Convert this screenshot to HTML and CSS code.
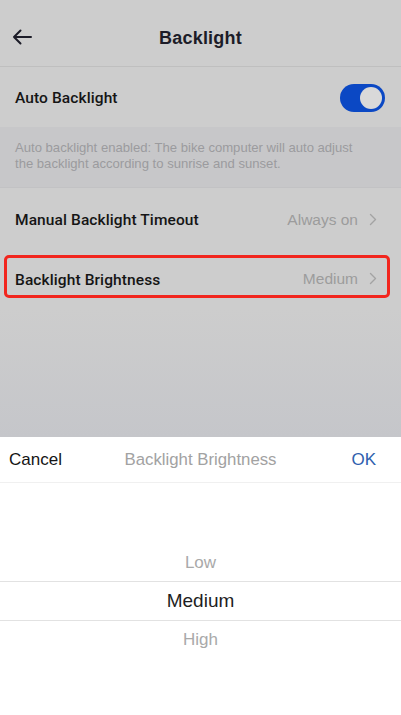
FILE: index.html
```html
<!DOCTYPE html>
<html>
<head>
<meta charset="utf-8">
<link rel="stylesheet" href="styles.css">
</head>
<body>
<div class="screen">
  <div class="page">
    <header class="nav">
      <span class="back">
        <svg width="20" height="16" viewBox="0 0 20 16"><path d="M19 8H2M8.5 1.5L2 8l6.5 6.5" fill="none" stroke="#1c1c28" stroke-width="2" stroke-linecap="round" stroke-linejoin="round"/></svg>
      </span>
      <h1 class="title">Backlight</h1>
    </header>
    <div class="row row-auto">
      <span class="label">Auto Backlight</span>
      <span class="toggle"><span class="knob"></span></span>
    </div>
    <div class="desc">Auto backlight enabled: The bike computer will auto adjust the backlight according to sunrise and sunset.</div>
    <div class="row">
      <span class="label">Manual Backlight Timeout</span>
      <span class="value">Always on<span class="chev"><svg width="8" height="13" viewBox="0 0 8 13"><path d="M1.5 1.5l5 5-5 5" fill="none" stroke="#a3a3a3" stroke-width="1.4" stroke-linecap="round" stroke-linejoin="round"/></svg></span></span>
    </div>
    <div class="row highlight">
      <span class="label">Backlight Brightness</span>
      <span class="value">Medium<span class="chev"><svg width="8" height="13" viewBox="0 0 8 13"><path d="M1.5 1.5l5 5-5 5" fill="none" stroke="#a3a3a3" stroke-width="1.4" stroke-linecap="round" stroke-linejoin="round"/></svg></span></span>
    </div>
    <div class="filler"></div>
  </div>
  <div class="sheet">
    <div class="sheet-head">
      <span class="cancel">Cancel</span>
      <span class="sheet-title">Backlight Brightness</span>
      <span class="ok">OK</span>
    </div>
    <div class="picker">
      <div class="opt dim">Low</div>
      <div class="opt sel">Medium</div>
      <div class="opt dim">High</div>
    </div>
  </div>
</div>
</body>
</html>
```

FILE: styles.css
```css
html, body {
  margin: 0;
  padding: 0;
}
body {
  font-family: "Liberation Sans", Arial, sans-serif;
  background: #ffffff;
}
.screen {
  width: 401px;
  height: 715px;
  display: flex;
  flex-direction: column;
  overflow: hidden;
}
.page {
  background: #cdcdcd;
  height: 437px;
  display: flex;
  flex-direction: column;
}
.nav {
  border-bottom: 1px solid #bfbfbf;
  display: flex;
  align-items: center;
  justify-content: center;
  position: relative;
  box-sizing: border-box;
  height: 67px;
}
.back {
  position: absolute;
  left: 12px;
  top: 29px;
  display: flex;
}
.title {
  margin: 0;
  font-size: 18px;
  font-weight: 700;
  color: #1c1c28;
  letter-spacing: 0.2px;
  padding-top: 10px;
}
.row {
  height: 60px;
  display: flex;
  align-items: center;
  justify-content: space-between;
  padding: 0 16px 0 15px;
  box-sizing: border-box;
  position: relative;
}
.row-auto {
  padding-top: 1px;
}
.label {
  font-family: Roboto, "Liberation Sans", sans-serif;
  font-size: 15.5px;
  font-weight: 500;
  color: #151515;
  letter-spacing: 0.1px;
}
.value {
  display: flex;
  align-items: center;
  font-size: 15.5px;
  color: #9c9c9c;
}
.chev {
  display: flex;
  margin-left: 11px;
  margin-right: 8px;
}
.toggle {
  width: 45px;
  height: 28px;
  border-radius: 14px;
  background: #0b48c4;
  display: flex;
  align-items: center;
  justify-content: flex-end;
  padding: 0 3px;
  box-sizing: border-box;
}
.knob {
  width: 22px;
  height: 22px;
  border-radius: 50%;
  background: #d9d9d9;
}
.desc {
  background: #c7c7c9;
  height: 61px;
  box-sizing: border-box;
  padding: 13px 42px 0 15px;
  font-size: 13.1px;
  line-height: 16px;
  color: #9b9b9e;
  border-bottom: 1px solid #c2c2c4;
}
.desc + .row {
  padding-top: 3px;
}
.highlight {
  height: 61px;
}
.highlight::after {
  content: "";
  position: absolute;
  left: 4px;
  right: 11px;
  top: 7px;
  bottom: 11px;
  border: 3px solid #f2261e;
  border-radius: 5px;
}
.highlight .label {
  position: relative;
  top: 1px;
}
.filler {
  flex: 1;
  background: linear-gradient(#cdcdcd, #c5c6ca);
}
.sheet {
  flex: 1;
  background: #ffffff;
  display: flex;
  flex-direction: column;
}
.sheet-head {
  height: 46px;
  display: flex;
  align-items: center;
  justify-content: space-between;
  padding: 0 25px 0 9px;
  border-bottom: 1px solid #f0f0f0;
  box-sizing: border-box;
  position: relative;
}
.cancel {
  font-size: 17px;
  color: #141414;
}
.sheet-title {
  position: absolute;
  left: 0;
  right: 0;
  text-align: center;
  font-size: 16.8px;
  color: #a2a2a2;
  pointer-events: none;
}
.ok {
  font-size: 17px;
  color: #2e5fae;
}
.picker {
  padding-top: 61px;
  display: flex;
  flex-direction: column;
}
.opt {
  height: 37px;
  display: flex;
  align-items: center;
  justify-content: center;
  font-size: 17px;
}
.dim {
  color: #a9a9a9;
}
.sel {
  height: 38px;
  color: #1e1e1e;
  font-size: 19px;
  border-top: 1px solid #e2e2e2;
  border-bottom: 1px solid #e2e2e2;
}
```
